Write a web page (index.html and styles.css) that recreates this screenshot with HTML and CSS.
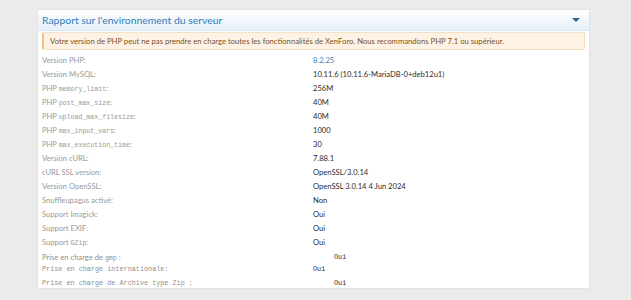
FILE: index.html
```html
<!DOCTYPE html>
<html lang="fr">
<head>
    <meta charset="UTF-8">
    <title>Rapport sur l'environnement du serveur</title>
    <link rel="stylesheet" href="styles.css">
</head>
<body>
    <div class="block">
        <div class="block-header">
            <h2 class="block-title">Rapport sur l'environnement du serveur</h2>
            <span class="toggle"></span>
        </div>
        <div class="block-body">
            <div class="notice">Votre version de PHP peut ne pas prendre en charge toutes les fonctionnalités de XenForo. Nous recommandons PHP 7.1 ou supérieur.</div>
            <dl class="pairs">
                <dt>Version PHP:</dt><dd><a class="link">8.2.25</a></dd>
                <dt>Version MySQL:</dt><dd>10.11.6 (10.11.6-MariaDB-0+deb12u1)</dd>
                <dt>PHP <code>memory_limit</code>:</dt><dd>256M</dd>
                <dt>PHP <code>post_max_size</code>:</dt><dd>40M</dd>
                <dt>PHP <code>upload_max_filesize</code>:</dt><dd>40M</dd>
                <dt>PHP <code>max_input_vars</code>:</dt><dd>1000</dd>
                <dt>PHP <code>max_execution_time</code>:</dt><dd>30</dd>
                <dt>Version cURL:</dt><dd>7.88.1</dd>
                <dt>cURL SSL version:</dt><dd>OpenSSL/3.0.14</dd>
                <dt>Version OpenSSL:</dt><dd>OpenSSL 3.0.14 4 Jun 2024</dd>
                <dt>Snuffleupagus activé:</dt><dd>Non</dd>
                <dt>Support Imagick:</dt><dd>Oui</dd>
                <dt>Support EXIF:</dt><dd>Oui</dd>
                <dt>Support <code>GZip</code>:</dt><dd>Oui</dd>
            </dl>
            <div class="raw">
                <div class="raw-row gap-top"><span class="raw-label">Prise en charge de <code>gmp</code> :</span><span class="raw-value indent">Oui</span></div>
                <div class="raw-row mono tight"><span class="raw-label">Prise en charge internationale:</span><span class="raw-value">Oui</span></div>
                <div class="raw-row mono"><span class="raw-label">Prise en charge de Archive type Zip :</span><span class="raw-value indent">Oui</span></div>
            </div>
        </div>
    </div>
</body>
</html>
```

FILE: styles.css
```css
body {
    margin: 0;
    padding: 9px 41px 0 37px;
    background: #ebebeb;
    font-family: 'Lato', 'Open Sans', sans-serif;
}

.block {
    background: #ffffff;
    border: 1px solid #e2e2e2;
    border-radius: 2px;
    height: 280px;
    box-sizing: border-box;
}

.block-header {
    display: flex;
    align-items: center;
    justify-content: space-between;
    height: 20px;
    padding: 0 9px 0 4px;
    background: linear-gradient(to bottom, #ffffff, #e4f0fb);
    border-bottom: 1px solid #dae6f2;
}

.block-title {
    margin: 0;
    font-size: 10.4px;
    font-weight: 400;
    color: #2f7cb9;
}

.toggle {
    width: 0;
    height: 0;
    border-left: 4px solid transparent;
    border-right: 4px solid transparent;
    border-top: 4px solid #2b5f8f;
}

.block-body {
    padding: 1px 4px 0 4px;
}

.notice {
    background: #fdf2e4;
    border: 1px solid #f4e2c8;
    border-left: 2px solid #f0c48c;
    border-radius: 2px;
    color: #7a5426;
    font-size: 7.7px;
    line-height: 16px;
    padding: 0 6px;
}

.pairs {
    display: grid;
    grid-template-columns: 271px 1fr;
    grid-auto-rows: 14px;
    margin: 3px 0 0 0;
    font-size: 7.6px;
    line-height: 14px;
}

.pairs dt {
    color: #999999;
}

.pairs dd {
    margin: 0;
    color: #2b2b2b;
}

.link {
    color: #3a84c0;
}

code {
    font-family: 'Liberation Mono', 'DejaVu Sans Mono', monospace;
    font-size: 6.6px;
}

.raw {
    font-size: 7.6px;
}

.raw-row {
    display: flex;
    height: 13px;
    line-height: 13px;
}

.raw-label {
    width: 271px;
    color: #8f8f8f;
}

.raw-value {
    color: #2b2b2b;
    font-family: 'Liberation Mono', 'DejaVu Sans Mono', monospace;
    font-size: 6.8px;
}

.indent {
    padding-left: 21px;
}

.mono {
    font-family: 'Liberation Mono', 'DejaVu Sans Mono', monospace;
    font-size: 6.8px;
}

.gap-top {
    margin-top: 2px;
}

.tight {
    height: 11px;
    line-height: 11px;
    margin-bottom: 2px;
}
```
